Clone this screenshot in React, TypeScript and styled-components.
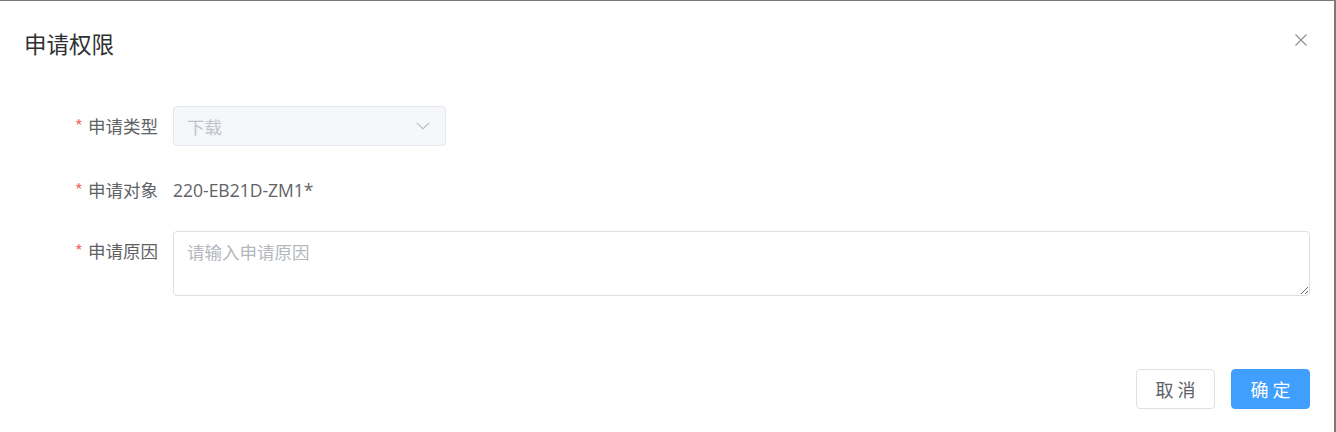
import styled, { createGlobalStyle } from 'styled-components';

const GlobalStyle = createGlobalStyle`
    html, body {
        margin: 0;
        padding: 0;
        background: #7a7a7a;
        font-family: "Noto Sans CJK SC", "Microsoft YaHei", "Liberation Sans", sans-serif;
    }
`

function CloseIcon() {
    return (
        <svg width="12" height="12" viewBox="0 0 12 12">
            <path d="M0.5 0.5 L11.5 11.5 M11.5 0.5 L0.5 11.5" stroke="#909399" strokeWidth="1.3" fill="none" />
        </svg>
    );
}

function ArrowDown() {
    return (
        <svg width="14" height="8" viewBox="0 0 14 8">
            <path d="M0.8 0.8 L7 6.8 L13.2 0.8" stroke="#c0c4cc" strokeWidth="1.2" fill="none" />
        </svg>
    );
}

interface FormRowProps {
    label: string;
    gap: number;
    children: React.ReactNode;
}

function FormRow({ label, gap, children }: FormRowProps) {
    return (
        <Row $gap={gap}>
            <Label>
                <Required>*</Required>
                {label}
            </Label>
            <Control>{children}</Control>
        </Row>
    );
}

function App() {
    return (
        <>
            <GlobalStyle />
            <Dialog>
                <Header>
                    <Title>申请权限</Title>
                    <CloseButton><CloseIcon /></CloseButton>
                </Header>
                <Body>
                    <FormRow label="申请类型" gap={24}>
                        <Select>
                            <span>下载</span>
                            <ArrowDown />
                        </Select>
                    </FormRow>
                    <FormRow label="申请对象" gap={21}>
                        <Value>220-EB21D-ZM1*</Value>
                    </FormRow>
                    <FormRow label="申请原因" gap={0}>
                        <TextArea placeholder="请输入申请原因" />
                    </FormRow>
                </Body>
                <Footer>
                    <Button>取消</Button>
                    <Button $primary>确定</Button>
                </Footer>
            </Dialog>
        </>
    );
}

const Dialog = styled.div`
    margin-top: 1px;
    width: 1334px;
    height: 431px;
    background: #ffffff;
    box-sizing: border-box;
    padding: 0 24px;
    display: flex;
    flex-direction: column;
    overflow: hidden;
`

const Header = styled.div`
    display: flex;
    align-items: center;
    justify-content: space-between;
    padding-top: 27px;
    height: 30px;
`

const Title = styled.span`
    font-size: 22.5px;
    line-height: 30px;
    color: #303133;
`

const CloseButton = styled.span`
    display: flex;
    width: 12px;
    height: 12px;
    margin-right: 3px;
    margin-top: -6px;
    cursor: pointer;
`

const Body = styled.div`
    padding-top: 48px;
    display: flex;
    flex-direction: column;
`

const Row = styled.div<{ $gap: number }>`
    display: flex;
    align-items: flex-start;
    margin-bottom: ${p => p.$gap}px;
`

const Label = styled.label`
    width: 149px;
    flex-shrink: 0;
    box-sizing: border-box;
    padding-right: 15px;
    text-align: right;
    font-size: 17.5px;
    line-height: 40px;
    color: #606266;
`

const Required = styled.span`
    color: #f56c6c;
    margin-right: 5px;
`

const Control = styled.div`
    flex: 1;
    min-width: 0;
    display: flex;
`

const Select = styled.div`
    width: 273px;
    height: 40px;
    box-sizing: border-box;
    border: 1px solid #e4e7ed;
    border-radius: 4px;
    background: #f5f7fa;
    display: flex;
    align-items: center;
    justify-content: space-between;
    padding: 0 15px 0 13px;
    font-size: 17.5px;
    color: #c0c4cc;
    cursor: not-allowed;
`

const Value = styled.span`
    font-family: "Open Sans", "Noto Sans CJK SC", sans-serif;
    font-size: 17.5px;
    line-height: 40px;
    color: #606266;
`

const TextArea = styled.textarea`
    width: 100%;
    height: 65px;
    box-sizing: border-box;
    border: 1px solid #dcdfe6;
    border-radius: 4px;
    padding: 7px 13px;
    font-family: inherit;
    font-size: 17.5px;
    line-height: 1.5;
    color: #606266;
    resize: vertical;
    outline: none;
    &::placeholder {
        color: #b4b7bd;
    }
`

const Footer = styled.div`
    margin-top: 73px;
    display: flex;
    justify-content: flex-end;
    gap: 16px;
`

const Button = styled.button<{ $primary?: boolean }>`
    width: 79px;
    height: 40px;
    box-sizing: border-box;
    border-radius: 4px;
    border: 1px solid ${p => (p.$primary ? '#409eff' : '#dcdfe6')};
    background: ${p => (p.$primary ? '#409eff' : '#ffffff')};
    color: ${p => (p.$primary ? '#ffffff' : '#606266')};
    font-family: inherit;
    font-size: 18px;
    letter-spacing: 4px;
    padding: 0 0 0 4px;
    cursor: pointer;
`

export default App;
